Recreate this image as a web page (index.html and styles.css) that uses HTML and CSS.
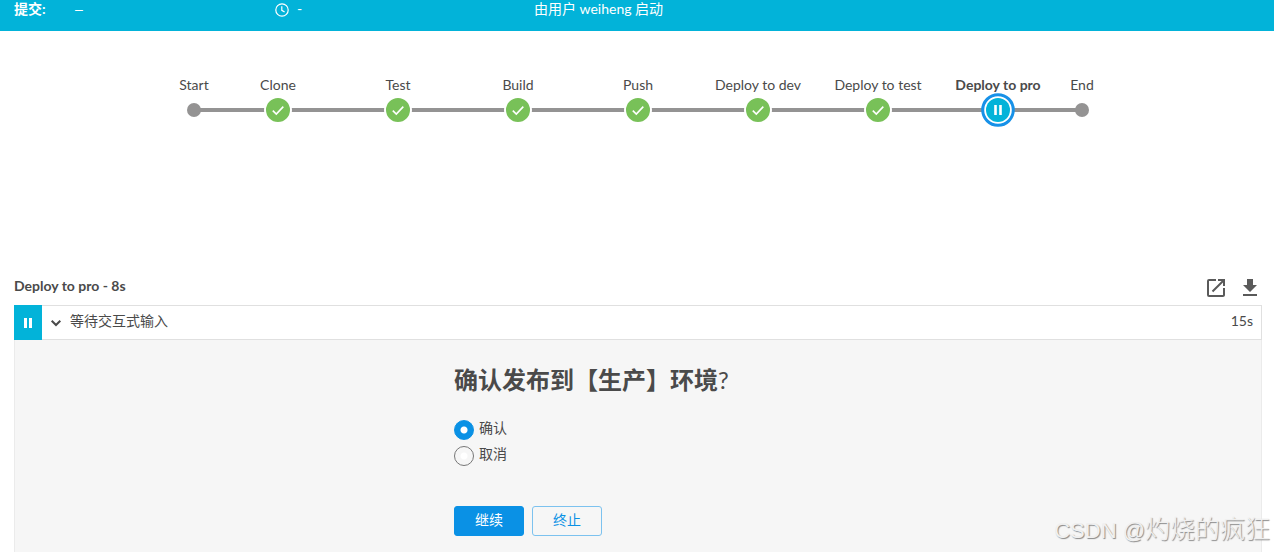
FILE: index.html
```html
<!DOCTYPE html>
<html lang="zh-CN">
<head>
<meta charset="utf-8">
<meta name="viewport" content="width=device-width, initial-scale=1">
<title>Deploy to pro</title>
<link rel="stylesheet" href="styles.css">
</head>
<body>
<header class="run-header">
  <span class="run-label">提交:</span>
  <span class="run-commit">–</span>
  <span class="run-time">
    <svg class="clock" viewBox="0 0 14 14" aria-hidden="true"><circle cx="7" cy="7" r="6.2"/><path d="M6.8 3.3v4l2.8 1.8"/></svg>
    <span>-</span>
  </span>
  <span>由用户 weiheng 启动</span>
</header>

<main class="run">
  <ol class="pipeline">
    <li class="stage stage-start"><span class="stage-name">Start</span><span class="node"><span class="dot"></span></span></li>
    <li class="stage"><span class="stage-name">Clone</span><span class="node"><svg class="mark done" viewBox="0 0 28 28" aria-hidden="true"><circle cx="14" cy="14" r="13"/><path d="M8.8 14.6l3.5 3.4 7-7.4"/></svg></span></li>
    <li class="stage"><span class="stage-name">Test</span><span class="node"><svg class="mark done" viewBox="0 0 28 28" aria-hidden="true"><circle cx="14" cy="14" r="13"/><path d="M8.8 14.6l3.5 3.4 7-7.4"/></svg></span></li>
    <li class="stage"><span class="stage-name">Build</span><span class="node"><svg class="mark done" viewBox="0 0 28 28" aria-hidden="true"><circle cx="14" cy="14" r="13"/><path d="M8.8 14.6l3.5 3.4 7-7.4"/></svg></span></li>
    <li class="stage"><span class="stage-name">Push</span><span class="node"><svg class="mark done" viewBox="0 0 28 28" aria-hidden="true"><circle cx="14" cy="14" r="13"/><path d="M8.8 14.6l3.5 3.4 7-7.4"/></svg></span></li>
    <li class="stage"><span class="stage-name">Deploy to dev</span><span class="node"><svg class="mark done" viewBox="0 0 28 28" aria-hidden="true"><circle cx="14" cy="14" r="13"/><path d="M8.8 14.6l3.5 3.4 7-7.4"/></svg></span></li>
    <li class="stage"><span class="stage-name">Deploy to test</span><span class="node"><svg class="mark done" viewBox="0 0 28 28" aria-hidden="true"><circle cx="14" cy="14" r="13"/><path d="M8.8 14.6l3.5 3.4 7-7.4"/></svg></span></li>
    <li class="stage stage-current"><span class="stage-name">Deploy to pro</span><span class="node"><svg class="mark-current" viewBox="0 0 34 34" aria-hidden="true"><circle class="ring" cx="17" cy="17" r="15.3"/><circle class="disc" cx="17" cy="17" r="12"/><path d="M13.2 12h2.600v10h-2.600zM18.200 12h2.600v10h-2.600z"/></svg></span></li>
    <li class="stage stage-end"><span class="stage-name">End</span><span class="node"><span class="dot"></span></span></li>
  </ol>

  <section class="log">
    <div class="log-bar">
      <h1 class="log-title">Deploy to pro - 8s</h1>
      <div class="log-actions">
        <a class="icon-link" href="#open" aria-label="打开"><svg viewBox="0 0 24 24" aria-hidden="true"><path d="M19 19H5V5h7V3H5a2 2 0 0 0-2 2v14a2 2 0 0 0 2 2h14c1.1 0 2-.9 2-2v-7h-2v7zM14 3v2h3.600l-9.800 9.800 1.400 1.400L19 6.400V10h2V3h-7z"/></svg></a>
        <a class="icon-link" href="#download" aria-label="下载"><svg viewBox="0 0 24 24" aria-hidden="true"><path d="M19 9h-4V3H9v6H5l7 7 7-7zM5 18v2h14v-2H5z"/></svg></a>
      </div>
    </div>

    <div class="step">
      <button class="step-head" type="button" aria-expanded="true">
        <span class="step-status"><svg viewBox="0 0 10 12" aria-hidden="true"><path d="M1 1h3v10H1zM6 1h3v10H6z"/></svg></span>
        <svg class="chevron" viewBox="0 0 12 12" aria-hidden="true"><path d="M1.700 3.700L6 8l4.300-4.300"/></svg>
        <span class="step-name">等待交互式输入</span>
        <span class="step-time">15s</span>
      </button>
      <form class="step-body">
        <h2 class="question">确认发布到【生产】环境<span class="question-mark">?</span></h2>
        <div class="choices">
          <label class="choice"><input class="radio" type="radio" name="confirm" checked><span class="choice-text">确认</span></label>
          <label class="choice"><input class="radio" type="radio" name="confirm"><span class="choice-text">取消</span></label>
        </div>
        <div class="buttons">
          <button class="btn btn-primary" type="button">继续</button>
          <button class="btn btn-outline" type="button">终止</button>
        </div>
      </form>
    </div>
  </section>
</main>
<div class="watermark"><span class="watermark-site">CSDN @</span>灼烧的疯狂</div>
</body>
</html>
```
FILE: styles.css
```css
* { box-sizing: border-box; }

body {
  margin: 0;
  min-height: 100vh;
  display: flex;
  flex-direction: column;
  position: relative;
  overflow-x: hidden;
  background: #fff;
  color: #4a4a4a;
  font: 14px/20px Lato, "Noto Sans CJK SC", sans-serif;
}

.run-header {
  display: grid;
  grid-template-columns: 61px 200px 259px 1fr;
  padding: 0 14px 13px;
  background: #02b3d9;
  color: #fff;
  line-height: 18px;
}
.run-label { font-weight: 700; }
.run-commit { font-family: "Liberation Sans", sans-serif; }
.run-time { display: flex; align-items: flex-end; gap: 8px; }
.clock { width: 14px; height: 14px; margin-bottom: 1px; fill: none; stroke: #fff; stroke-width: 1.2; }

.run {
  flex: 1;
  display: flex;
  flex-direction: column;
  padding: 44px 12px 0 14px;
}

.pipeline {
  display: flex;
  justify-content: center;
  margin: 0;
  padding: 0 0 148px;
  list-style: none;
}
.stage {
  width: 120px;
  display: flex;
  flex-direction: column;
  align-items: center;
}
.stage-start, .stage-end { width: 48px; }
.stage-current { font-weight: 700; }
.stage-name { white-space: nowrap; }
.node {
  width: 100%;
  height: 30px;
  display: flex;
  align-items: center;
  justify-content: center;
  background: linear-gradient(#949393, #949393) center / 100% 4px no-repeat;
}
.stage-start .node { background-position: right; background-size: 50% 4px; }
.stage-end .node { background-position: left; background-size: 50% 4px; }
.dot { width: 14px; height: 14px; border-radius: 50%; background: #949393; }
.mark { width: 28px; height: 28px; }
.done circle { fill: #78c158; stroke: #fff; stroke-width: 2; }
.done path { fill: none; stroke: #fff; stroke-width: 1.6; }
.mark-current { width: 34px; height: 34px; flex: none; }
.ring { fill: #fff; stroke: #1791e8; stroke-width: 3; }
.disc { fill: #02b3d9; }
.mark-current path { fill: #fff; }

.log { flex: 1; display: flex; flex-direction: column; }
.log-bar {
  display: flex;
  justify-content: space-between;
  height: 32px;
}
.log-title { margin: 0; padding-top: 3px; font-size: 14px; line-height: 20px; }
.log-actions { display: flex; gap: 10px; padding-top: 3px; }
.icon-link { width: 24px; height: 24px; }
.icon-link svg { display: block; width: 24px; height: 24px; fill: #5a5a5a; }

.step { flex: 1; display: flex; flex-direction: column; }
.step-head {
  display: flex;
  align-items: center;
  width: 100%;
  height: 35px;
  padding: 0 8px 0 0;
  border: 1px solid #e0e0e0;
  border-left: 0;
  background: #fff;
  color: inherit;
  font: inherit;
  text-align: left;
}
.step-status {
  width: 28px;
  height: 35px;
  display: flex;
  align-items: center;
  justify-content: center;
  background: #02b3d9;
}
.step-status svg { width: 10px; height: 12px; fill: #fff; }
.chevron { width: 12px; height: 12px; margin: 0 8px; fill: none; stroke: #4a4a4a; stroke-width: 2; }
.step-name, .step-time { padding-bottom: 4px; }
.step-name { flex: 1; }

.step-body {
  flex: 1;
  display: flex;
  flex-direction: column;
  margin: 0;
  padding: 24px 20px 16px 439px;
  border: 1px solid #ebebeb;
  border-width: 0 1px;
  background: #f6f6f6;
}
.question { margin: 0 0 24px; font-size: 24px; line-height: 32px; }
.question-mark { font-weight: 400; }
.choices { display: flex; flex-direction: column; gap: 6px; }
.choice { display: flex; align-items: center; gap: 5px; height: 20px; }
.choice-text { padding-bottom: 4px; }
.radio {
  appearance: none;
  width: 20px;
  height: 20px;
  margin: 0;
  border: 1px solid #777;
  border-radius: 50%;
  background: radial-gradient(circle, #fff 3px, transparent 4px);
}
.radio:checked {
  border-color: #0a91e5;
  background: radial-gradient(circle, #fff 3px, #0a91e5 4px);
}
.buttons { display: flex; gap: 8px; margin-top: 40px; }
.btn {
  width: 70px;
  height: 30px;
  padding: 0 0 2px;
  border: 1px solid #0a91e5;
  border-radius: 3px;
  font: inherit;
}
.btn-primary { background: #0a91e5; color: #fff; }
.btn-outline { border-color: #7cc2ef; background: transparent; color: #0a91e5; }

.watermark {
  position: absolute;
  right: 4px;
  bottom: 4px;
  color: #f0f0f0;
  font: 300 25px/34px "Noto Sans CJK SC", sans-serif;
  text-shadow: 1px 1px 1px #888;
}
.watermark-site { font-family: "Liberation Sans", sans-serif; font-size: 22px; }
```
